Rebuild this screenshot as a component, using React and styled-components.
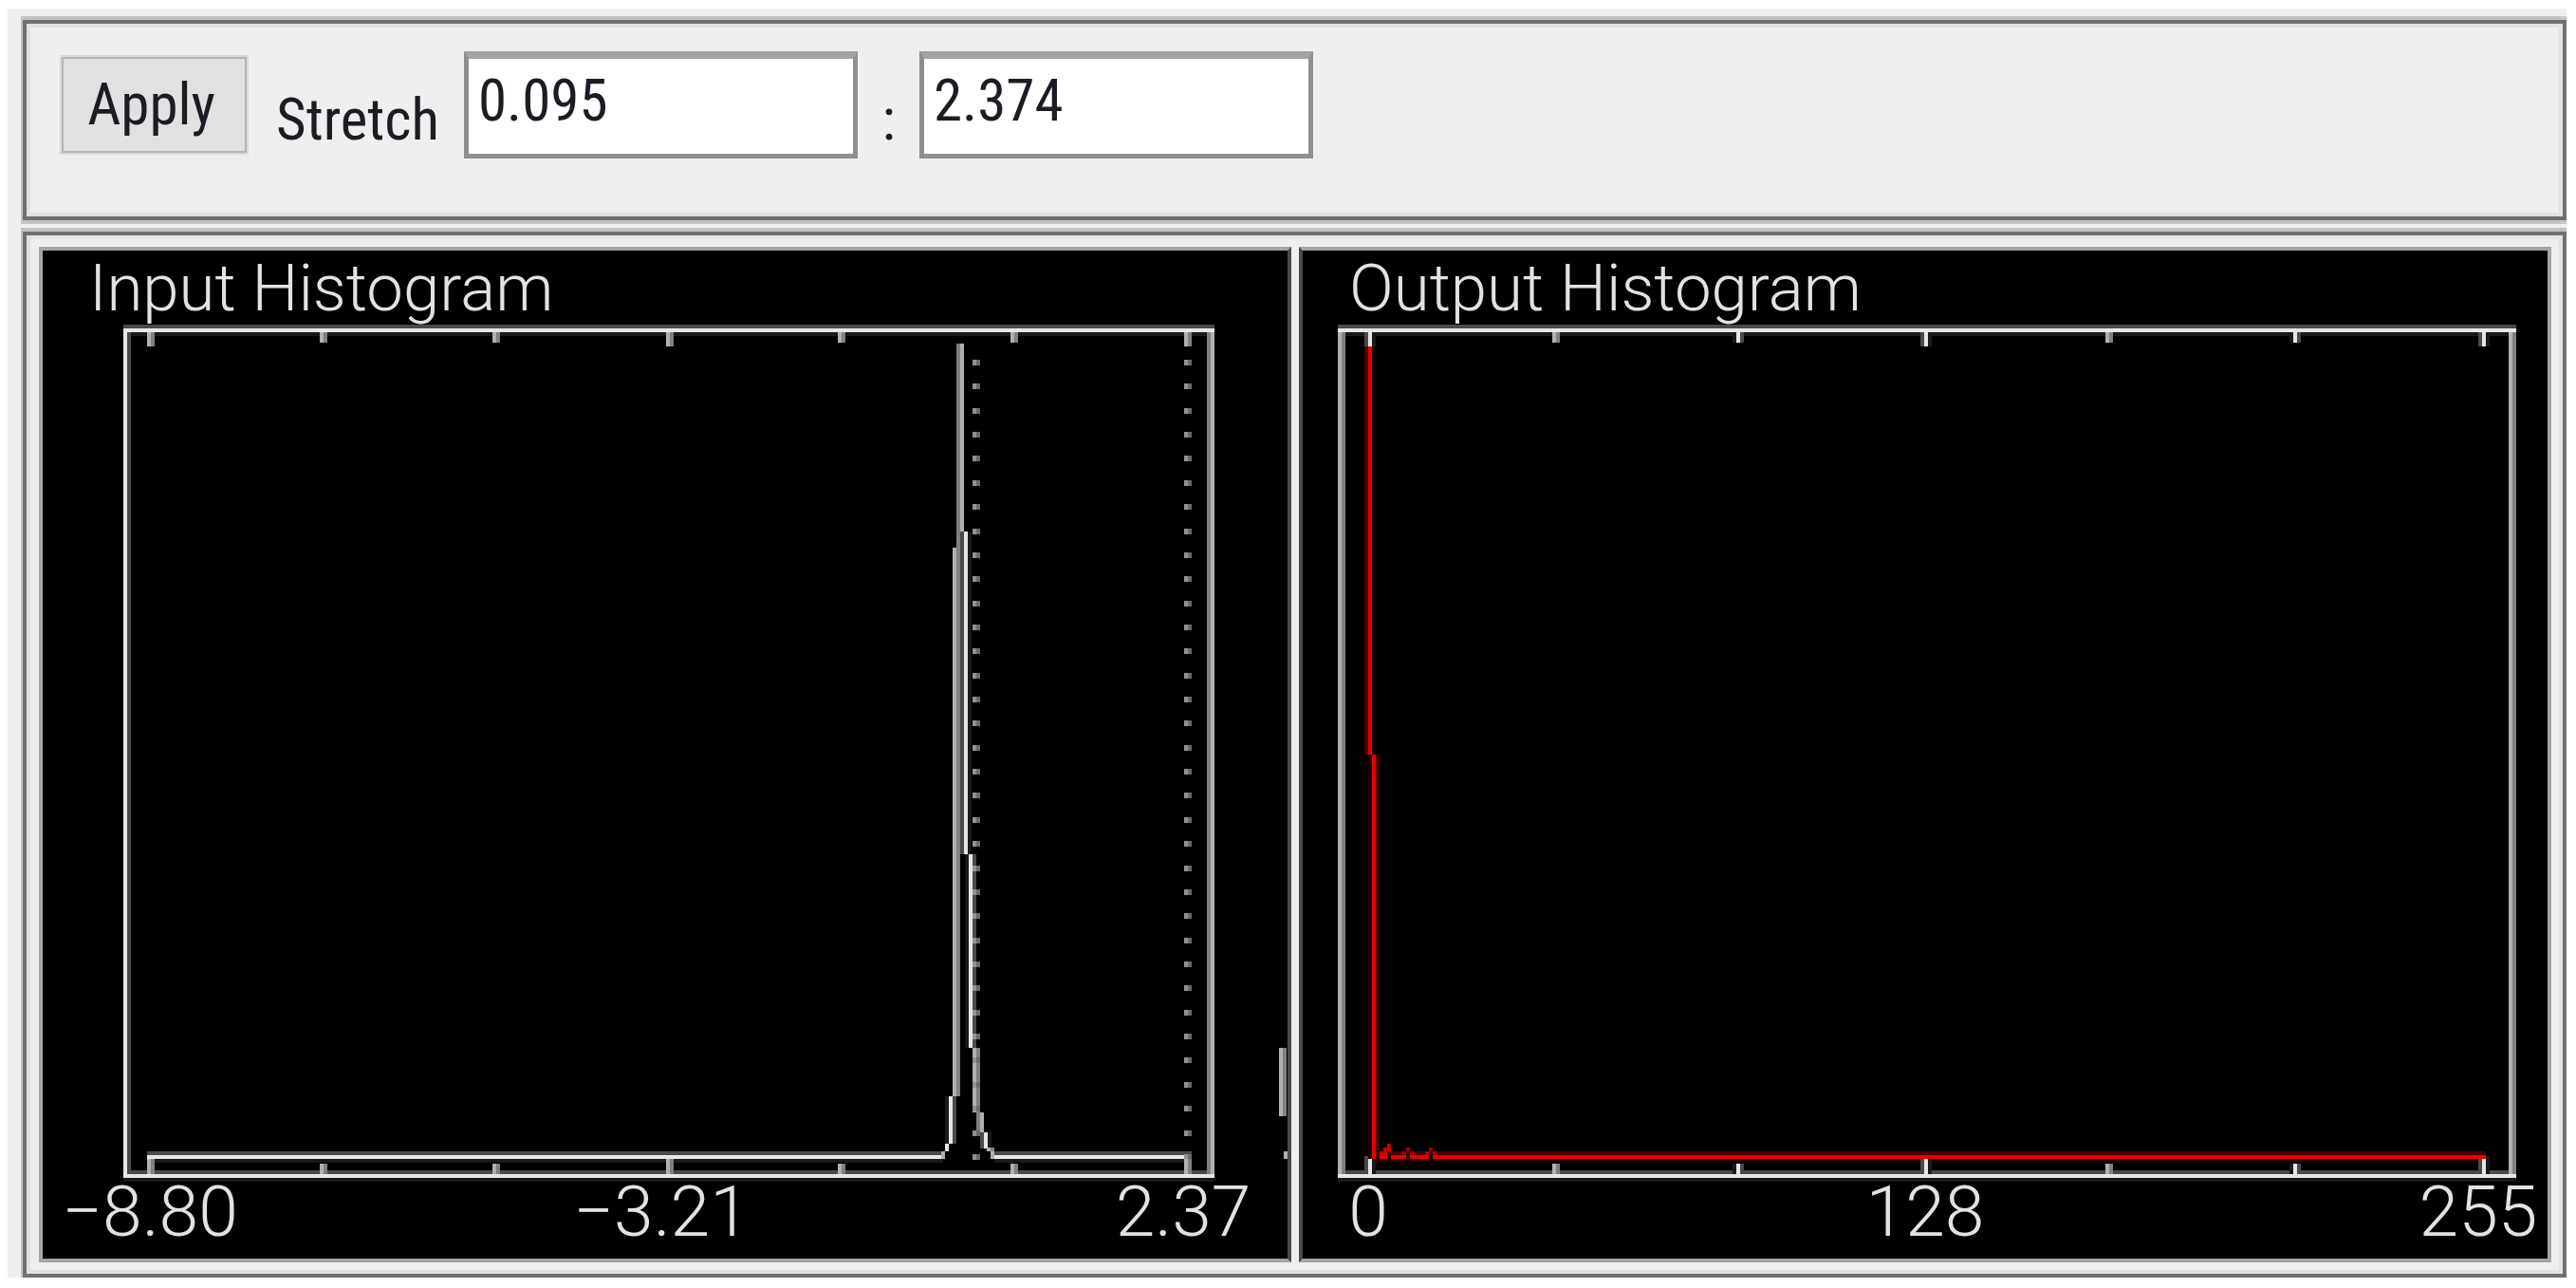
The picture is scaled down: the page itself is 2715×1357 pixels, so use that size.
import React from "react";
import styled, { createGlobalStyle } from "styled-components";

const GlobalStyle = createGlobalStyle`
  * { box-sizing: border-box; }
  body { margin: 0; background: #ffffff; }
`;

const uiFont = `"Roboto Condensed", "Liberation Sans", sans-serif`;
const plotFont = `Roboto, "Liberation Sans", sans-serif`;

const Window = styled.main`
  display: flex;
  flex-direction: column;
  gap: 4px;
  margin: 9px 10px 10px 8px;
  padding: 8px 0 0 14px;
  background: #efefef;
`;

const Group = styled.section`
  border: 4px solid #707070;
  box-shadow: inset 0 0 0 4px #e2e2e2;
`;

const GroupEdge = styled.div`
  border-style: solid;
  border-color: #c3c3c3;
  border-width: 4px 0 ${(p) => (p.$open ? 0 : 4)}px 2px;
`;

const Toolbar = styled(Group).attrs({ as: "form" })`
  display: flex;
  align-items: flex-start;
  height: 211px;
  padding: 29px 35px;
`;

const ApplyButton = styled.button`
  width: 199px;
  height: 105px;
  margin: 4px 29px 0 0;
  padding: 0 6px 2px 0;
  border: 4px solid #b4b4b4;
  outline: 2px solid #dadada;
  outline-offset: -2px;
  background: #e1e1e1;
  color: #1c1c24;
  font: 61px/76px ${uiFont};
`;

const Caption = styled.label`
  width: ${(p) => p.$width}px;
  margin-top: 34px;
  color: #1c1c24;
  font: 61px/76px ${uiFont};
  text-align: ${(p) => p.$align || "left"};
`;

const NumberBox = styled.input`
  width: 415px;
  height: 113px;
  padding: 0 10px 12px;
  border: 5px solid #8f8f8f;
  border-top: 8px solid #a4a4a4;
  border-radius: 0;
  background: #ffffff;
  color: #1c1c24;
  font: 61px/76px ${uiFont};
`;

const Charts = styled(Group)`
  display: grid;
  grid-template-columns: 1fr 1fr;
  gap: 8px;
  padding: 12px 12px 12px 13px;
`;

const Panel = styled.figure`
  margin: 0;
  border: 4px solid #a5a5a5;
  border-right-color: ${(p) => (p.$side === "left" ? "#4a4a4a" : "#a5a5a5")};
  border-left-color: ${(p) => (p.$side === "left" ? "#a5a5a5" : "#4a4a4a")};
  background: #000000;
`;

const Title = styled.figcaption`
  height: 70px;
  padding-left: 49px;
  color: #e2e2e2;
  font: 300 69px/80px ${plotFont};
`;

const Plot = styled.svg`
  display: block;
  width: 100%;
  height: auto;
`;

const AxisLabel = styled.text`
  fill: #e2e2e2;
  font: 300 75px ${plotFont};
  text-anchor: middle;
`;

const WHITE = { hi: "#e6e6e6", mid: "#b0b0b0", low: "#808080", dim: "#4a4a4a", faint: "#1a1a1a" };
const RED = { hi: "#e60000", dim: "#4a0000", faint: "#1a0000" };

// A horizontal trace with its soft upper and lower edges; y is the bright row.
function HLine({ x1, x2, y, tone = WHITE }) {
  return (
    <>
      <rect x={x1} y={y - 4} width={x2 - x1} height={4} fill={tone.dim} />
      <rect x={x1} y={y} width={x2 - x1} height={4} fill={tone.hi} />
      <rect x={x1} y={y + 4} width={x2 - x1} height={4} fill={tone.faint} />
    </>
  );
}

// A vertical trace made of side-by-side columns, one colour for each.
function VLine({ x, y1, y2, cols }) {
  return cols.map((fill, i) => (
    <rect key={i} x={x + i * 4} y={y1} width={4} height={y2 - y1} fill={fill} />
  ));
}

const { hi, mid, low, dim, faint } = WHITE;

function Axes({ left, right, leftCols, rightCols, ticks, labels }) {
  return (
    <g>
      <HLine x1={left} x2={right + 8} y={12} />
      <HLine x1={left} x2={right + 8} y={903} />
      <VLine x={left} y1={16} y2={903} cols={leftCols} />
      <VLine x={right} y1={16} y2={903} cols={rightCols} />
      {ticks.map(({ x, cols }, i) => {
        const major = i % 3 === 0;
        return (
          <g key={x}>
            <VLine x={x} y1={16} y2={major ? 31 : 27} cols={cols} />
            <VLine x={x} y1={major ? 884 : 892} y2={903} cols={cols} />
          </g>
        );
      })}
      {labels.map(([x, text]) => (
        <AxisLabel key={text} x={x} y={968}>{text}</AxisLabel>
      ))}
    </g>
  );
}

const pair = [mid, low];
const slim = [dim, hi, faint];
const slimRight = [faint, hi, dim];

const inputTicks = [110, 292, 474, 657, 838, 1020, 1203].map((x) => ({ x, cols: pair }));
const outputTicks = [
  { x: 65, cols: slim },
  { x: 263, cols: pair },
  { x: 453, cols: slimRight },
  { x: 651, cols: slim },
  { x: 846, cols: pair },
  { x: 1040, cols: slimRight },
  { x: 1239, cols: slim },
];

const inputTrace = [
  [963, 28, 243, [low, mid]],
  [967, 226, 566, [dim, hi, faint]],
  [959, 243, 821, [mid, low]],
  [951, 821, 871, [faint, hi, dim]],
  [951, 871, 879, [hi]],
  [947, 879, 887, [mid]],
  [972, 566, 770, [faint, hi, dim]],
  [980, 770, 838, [mid, low]],
  [984, 838, 860, [low, mid]],
  [988, 859, 876, [dim, hi, faint]],
  [995, 875, 879, [mid, low]],
  [999, 879, 887, [mid]],
  [1303, 770, 842, [mid, low]],
];

function Marker({ x }) {
  return Array.from({ length: 34 }, (_, i) => {
    const y = Math.round(45 + i * 25.36);
    return (
      <g key={i}>
        <rect x={x} y={y} width={4} height={6} fill="#929292" />
        <rect x={x + 4} y={y} width={4} height={6} fill="#6a6a6a" />
      </g>
    );
  });
}

function InputHistogram() {
  return (
    <Plot viewBox="0 0 1312 992" role="img" aria-label="Input histogram">
      <Axes
        left={85}
        right={1227}
        leftCols={[hi, dim]}
        rightCols={[low, mid]}
        ticks={inputTicks}
        labels={[[113, "−8.80"], [652, "−3.21"], [1202, "2.37"]]}
      />
      <HLine x1={110} x2={949} y={883} />
      <HLine x1={1003} x2={1211} y={883} />
      {inputTrace.map(([x, y1, y2, cols]) => (
        <VLine key={`${x}-${y1}`} x={x} y1={y1} y2={y2} cols={cols} />
      ))}
      <Marker x={980} />
      <Marker x={1203} />
      {[110, 657, 1203].map((x) => (
        <VLine key={x} x={x} y1={887} y2={903} cols={pair} />
      ))}
      <rect x={1308} y={879} width={4} height={8} fill={mid} />
    </Plot>
  );
}

function OutputHistogram() {
  return (
    <Plot viewBox="0 0 1312 992" role="img" aria-label="Output histogram">
      <HLine x1={73} x2={1247} y={883} tone={RED} />
      <Axes
        left={37}
        right={1271}
        leftCols={[mid, low]}
        rightCols={[mid, low]}
        ticks={outputTicks}
        labels={[[69, "0"], [656, "128"], [1239, "255"]]}
      />
      <rect x={73} y={883} width={1174} height={4} fill={RED.hi} />
      <VLine x={65} y1={31} y2={461} cols={[RED.dim, RED.hi, RED.faint]} />
      <VLine x={69} y1={461} y2={887} cols={[RED.faint, RED.hi, RED.dim]} />
      <path d="M81 879h4v4h-4zM85 875h4v8h-4zM89 871h4v8h-4z" fill="#c80000" />
      <path d="M105 879h4v4h-4zM109 875h4v4h-4zM113 879h4v4h-4z" fill="#a00000" />
      <path d="M129 879h4v4h-4zM133 875h4v4h-4zM137 879h4v4h-4z" fill="#a00000" />
      <path d="M89 883h4v4h-4zM109 883h4v4h-4zM133 883h4v4h-4z" fill="#1a0000" />
    </Plot>
  );
}

export default function App() {
  return (
    <>
      <GlobalStyle />
      <Window>
        <GroupEdge>
          <Toolbar onSubmit={(e) => e.preventDefault()}>
            <ApplyButton type="submit">Apply</ApplyButton>
            <Caption htmlFor="stretch-min" $width={198}>Stretch</Caption>
            <NumberBox id="stretch-min" defaultValue="0.095" />
            <Caption htmlFor="stretch-max" $width={65} $align="center">:</Caption>
            <NumberBox id="stretch-max" defaultValue="2.374" />
          </Toolbar>
        </GroupEdge>
        <GroupEdge $open>
          <Charts>
            <Panel $side="left">
              <Title>Input Histogram</Title>
              <InputHistogram />
            </Panel>
            <Panel $side="right">
              <Title>Output Histogram</Title>
              <OutputHistogram />
            </Panel>
          </Charts>
        </GroupEdge>
      </Window>
    </>
  );
}
